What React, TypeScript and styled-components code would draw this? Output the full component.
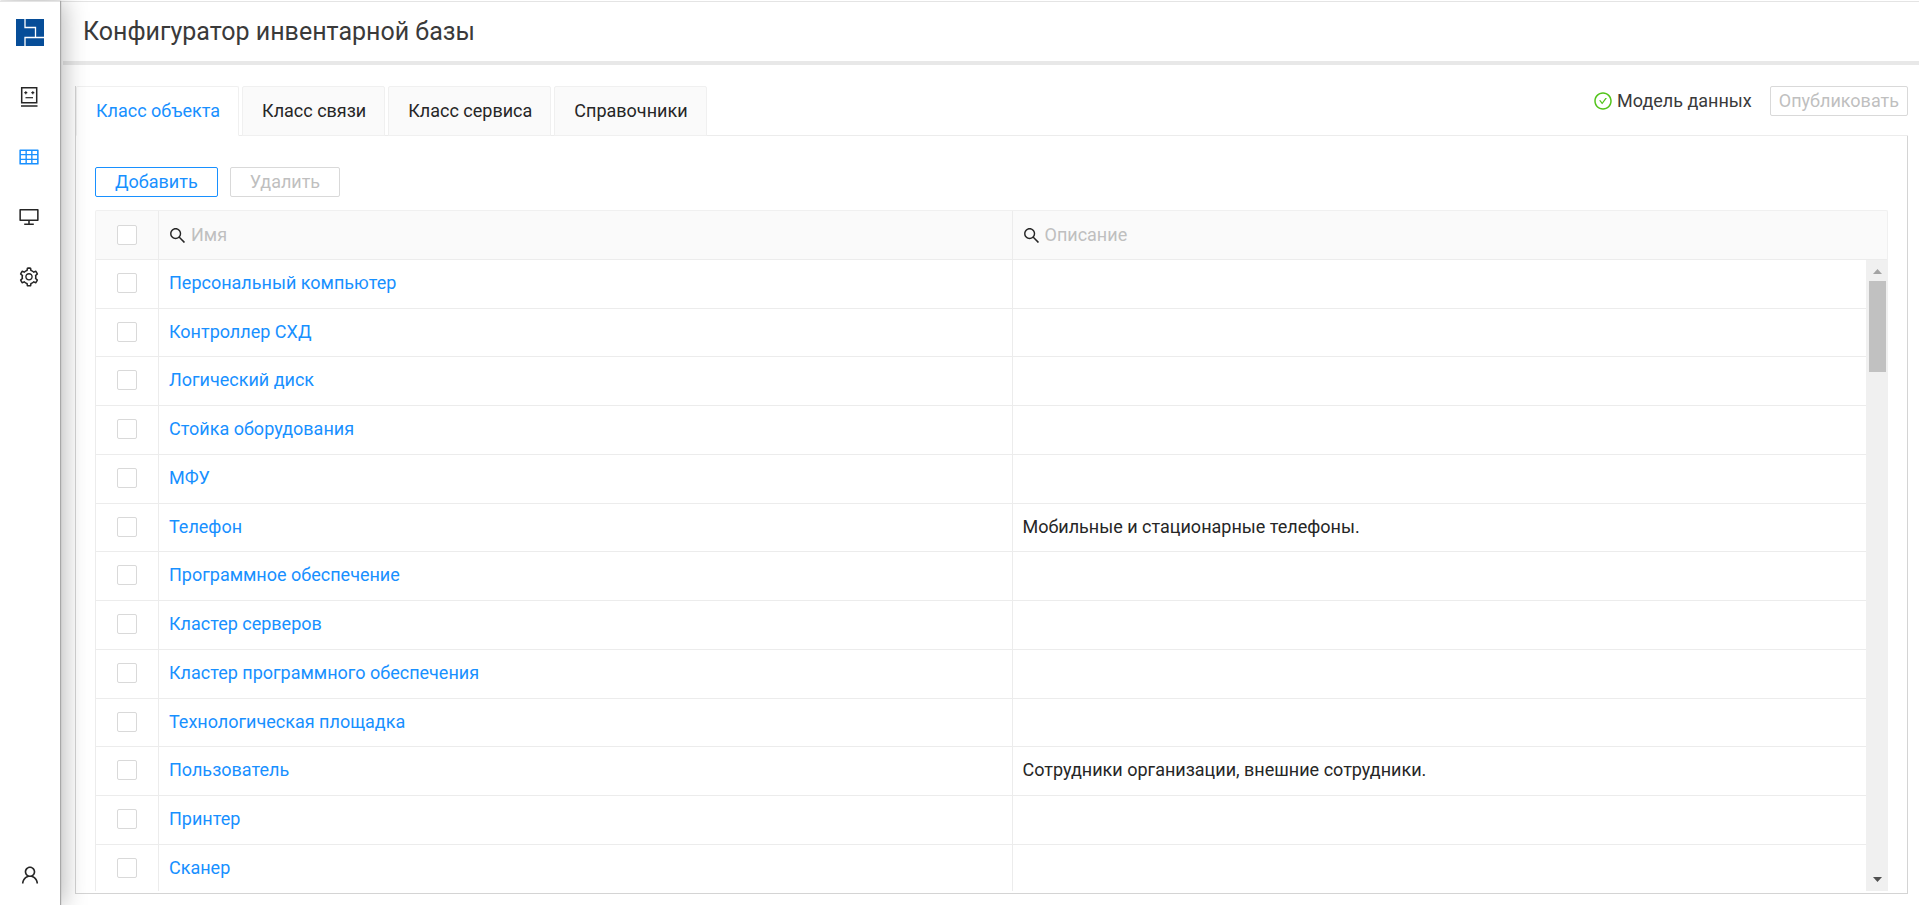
import React from 'react';
import styled, { createGlobalStyle, css } from 'styled-components';
import {
  AiOutlineCheckCircle,
  AiOutlineDesktop,
  AiOutlineSearch,
  AiOutlineSetting,
  AiOutlineTable,
  AiOutlineUser,
} from 'react-icons/ai';

const GlobalStyle = createGlobalStyle`
  *, *::before, *::after { box-sizing: border-box; }
  body {
    margin: 0;
    background: #fff;
    color: #262626;
    font-family: Roboto, "Liberation Sans", sans-serif;
    font-size: 18px;
    line-height: 24px;
  }
  button, input { font: inherit; margin: 0; }
`;

const Layout = styled.div`
  display: flex;
  height: 100vh;
  padding-top: 1px;
`;

const Sidebar = styled.nav`
  position: relative;
  z-index: 1;
  display: flex;
  flex-direction: column;
  align-items: center;
  width: 60px;
  flex: none;
  padding: 17px 0 19px;
  border-top: 1px solid #e4e4e4;
  background: #fff;
  box-shadow: 1px 0 1px #a8a8a8, 4px 0 24px rgba(0, 0, 0, 0.28);
`;

const LogoLink = styled.a`
  display: flex;
  height: 27px;
  margin-bottom: 40px;
`;

const NavLink = styled.a<{ $active?: boolean }>`
  display: flex;
  margin: 0 2px 38px 0;
  font-size: 22px;
  color: ${(p) => (p.$active ? '#1890ff' : '#262626')};
`;

const ProfileLink = styled(NavLink)`
  margin: auto 0 0;
`;

const Main = styled.div`
  display: flex;
  flex: 1;
  min-width: 0;
  flex-direction: column;
  padding-left: 3px;
  border-top: 1px solid #e4e4e4;
`;

const Header = styled.header`
  flex: none;
  height: 63px;
  padding: 14px 20px;
  border-bottom: 4px solid #e8e8e8;
`;

const Title = styled.h1`
  margin: 0;
  font-size: 25px;
  font-weight: 400;
  line-height: 32px;
  color: #3a3a3a;
`;

const Content = styled.main`
  display: flex;
  flex: 1;
  min-height: 0;
  flex-direction: column;
  padding: 21px 11px 11px 12px;
`;

const TabBar = styled.div`
  display: flex;
  flex: none;
  justify-content: space-between;
  height: 50px;
  border-left: 1px solid #d4d4d4;
`;

const Tabs = styled.div`
  display: flex;
  flex: 1;
  gap: 3px;
  box-shadow: inset 0 -1px #ececec;
`;

const Tab = styled.button<{ $active?: boolean }>`
  padding: 0 18px 0 19px;
  border: 1px solid #f0f0f0;
  border-radius: 2px 2px 0 0;
  background: #fafafa;
  color: #262626;
  ${(p) =>
    p.$active &&
    css`
      border-bottom-color: #fff;
      background: #fff;
      color: #1890ff;
    `}
`;

const Publish = styled.div`
  display: flex;
  align-items: flex-start;
  box-shadow: inset 0 -1px #ececec;
`;

const Status = styled.span`
  display: flex;
  align-items: center;
  gap: 4px;
  height: 30px;
  margin-right: 18px;
  color: #3a3a3a;
  svg {
    font-size: 20px;
    color: #52c41a;
  }
`;

const Button = styled.button<{ $compact?: boolean }>`
  height: 30px;
  padding: 0 ${(p) => (p.$compact ? 8 : 19)}px;
  border: 1px solid #1890ff;
  border-radius: 2px;
  background: #fff;
  color: #1890ff;
  line-height: 28px;
  &:disabled {
    border-color: #d9d9d9;
    color: #bfbfbf;
  }
`;

const Panel = styled.section`
  display: flex;
  flex: 1;
  min-height: 0;
  flex-direction: column;
  padding: 31px 19px 2px;
  border: solid #d4d4d4;
  border-width: 0 1px 1px;
`;

const Toolbar = styled.div`
  display: flex;
  flex: none;
  gap: 12px;
  margin-bottom: 13px;
`;

const Grid = styled.table`
  width: 100%;
  table-layout: fixed;
  border-collapse: separate;
  border-spacing: 0;
`;

const HeadGrid = styled(Grid)`
  flex: none;
  border: 1px solid #f0f0f0;
  border-bottom: 0;
  border-radius: 2px 2px 0 0;
  background: #fafafa;
`;

const CheckCol = styled.col`
  width: 63px;
`;

const ScrollCol = styled.col`
  width: 21px;
`;

const HeadCell = styled.th`
  height: 49px;
  padding: 0 9px;
  border-bottom: 1px solid #ececec;
  border-right: 1px solid #ececec;
  font-weight: 400;
  text-align: left;
  &:nth-last-child(-n + 2) { border-right: 0; }
`;

const Search = styled.label`
  display: flex;
  align-items: center;
  gap: 4px;
  font-size: 19px;
`;

const SearchInput = styled.input`
  flex: 1;
  min-width: 0;
  height: 30px;
  padding: 0 0 2px;
  border: 0;
  outline: 0;
  background: transparent;
  font-size: 18px;
  &::placeholder { color: #bfbfbf; opacity: 1; }
`;

const BodyArea = styled.div`
  display: flex;
  flex: 1;
  min-height: 0;
`;

const BodyScroll = styled.div`
  flex: 1;
  min-width: 0;
  overflow: hidden;
  border-left: 1px solid #ececec;
`;

/* Rows average 48.75px: every fourth one is a pixel shorter. */
const Row = styled.tr`
  height: 49px;
  &:nth-child(4n + 2) { height: 48px; }
`;

const Cell = styled.td`
  padding: 0 10px 2px;
  border-bottom: 1px solid #ececec;
  border-right: 1px solid #ececec;
  &:last-child { border-right: 0; }
`;

const Checkbox = styled.input`
  display: block;
  appearance: none;
  width: 20px;
  height: 20px;
  margin: 0 auto;
  border: 1px solid #d9d9d9;
  border-radius: 2px;
  background: #fff;
  &:checked { background: #1890ff; }
`;

const ItemLink = styled.a`
  color: #1890ff;
  text-decoration: none;
`;

const Scrollbar = styled.div`
  display: flex;
  flex: none;
  flex-direction: column;
  align-items: center;
  justify-content: space-between;
  width: 22px;
  background: #f0f0f0;
`;

const ScrollStart = styled.div`
  display: flex;
  flex-direction: column;
  align-items: center;
`;

const Thumb = styled.div`
  width: 17px;
  height: 91px;
  background: #c1c1c1;
`;

const Logo = () => (
  <svg width="28" height="27" viewBox="0 0 28 27" aria-hidden="true">
    <rect width="28" height="27" fill="#064d98" />
    <path d="M9 0V8.500H19.500V18.500M28 18.500H9V27" fill="none" stroke="#fff" strokeWidth="1.300" />
  </svg>
);

const RobotIcon = () => (
  <svg width="22" height="22" viewBox="0 0 22 22" fill="none" stroke="currentColor" aria-hidden="true">
    <path d="M3.700 1.700h15v15h-15zM3 20h16.500" strokeWidth="1.500" />
    <path d="M7.500 11.700h7.500" strokeWidth="1.200" />
    <path d="M6.300 6.700h3M13.300 6.700h3M7.800 5.200v3M14.800 5.200v3" strokeWidth="1.200" />
  </svg>
);

const Arrow = ({ down }: { down?: boolean }) => (
  <svg width="9" height="21" viewBox="0 0 9 21" aria-hidden="true">
    <path d={down ? 'M0 7h9L4.500 12z' : 'M0 14h9L4.500 9z'} fill={down ? '#505050' : '#a3a3a3'} />
  </svg>
);

const tabs = ['Класс объекта', 'Класс связи', 'Класс сервиса', 'Справочники'];

const items: { name: string; text?: string }[] = [
  { name: 'Персональный компьютер' },
  { name: 'Контроллер СХД' },
  { name: 'Логический диск' },
  { name: 'Стойка оборудования' },
  { name: 'МФУ' },
  { name: 'Телефон', text: 'Мобильные и стационарные телефоны.' },
  { name: 'Программное обеспечение' },
  { name: 'Кластер серверов' },
  { name: 'Кластер программного обеспечения' },
  { name: 'Технологическая площадка' },
  { name: 'Пользователь', text: 'Сотрудники организации, внешние сотрудники.' },
  { name: 'Принтер' },
  { name: 'Сканер' },
];

export default function App() {
  return (
    <>
      <GlobalStyle />
      <Layout>
        <Sidebar>
          <LogoLink href="#" aria-label="Главная"><Logo /></LogoLink>
          <NavLink href="#" aria-label="Робот"><RobotIcon /></NavLink>
          <NavLink href="#" aria-label="Таблица" $active><AiOutlineTable /></NavLink>
          <NavLink href="#" aria-label="Монитор"><AiOutlineDesktop /></NavLink>
          <NavLink href="#" aria-label="Настройки"><AiOutlineSetting /></NavLink>
          <ProfileLink href="#" aria-label="Профиль"><AiOutlineUser /></ProfileLink>
        </Sidebar>
        <Main>
          <Header><Title>Конфигуратор инвентарной базы</Title></Header>
          <Content>
            <TabBar>
              <Tabs role="tablist">
                {tabs.map((t, i) => (
                  <Tab key={t} role="tab" aria-selected={i === 0} $active={i === 0}>{t}</Tab>
                ))}
              </Tabs>
              <Publish>
                <Status><AiOutlineCheckCircle />Модель данных</Status>
                <Button $compact disabled>Опубликовать</Button>
              </Publish>
            </TabBar>
            <Panel>
              <Toolbar>
                <Button>Добавить</Button>
                <Button disabled>Удалить</Button>
              </Toolbar>
              <HeadGrid>
                <colgroup><CheckCol /><col /><col /><ScrollCol /></colgroup>
                <thead>
                  <tr>
                    <HeadCell><Checkbox type="checkbox" aria-label="Выбрать все" /></HeadCell>
                    {['Имя', 'Описание'].map((p) => (
                      <HeadCell key={p}>
                        <Search><AiOutlineSearch /><SearchInput placeholder={p} aria-label={p} /></Search>
                      </HeadCell>
                    ))}
                    <HeadCell />
                  </tr>
                </thead>
              </HeadGrid>
              <BodyArea>
                <BodyScroll>
                  <Grid>
                    <colgroup><CheckCol /><col /><col /></colgroup>
                    <tbody>
                      {items.map(({ name, text }) => (
                        <Row key={name}>
                          <Cell><Checkbox type="checkbox" aria-label={name} /></Cell>
                          <Cell><ItemLink href="#">{name}</ItemLink></Cell>
                          <Cell>{text}</Cell>
                        </Row>
                      ))}
                    </tbody>
                  </Grid>
                </BodyScroll>
                <Scrollbar aria-hidden="true">
                  <ScrollStart><Arrow /><Thumb /></ScrollStart>
                  <Arrow down />
                </Scrollbar>
              </BodyArea>
            </Panel>
          </Content>
        </Main>
      </Layout>
    </>
  );
}
